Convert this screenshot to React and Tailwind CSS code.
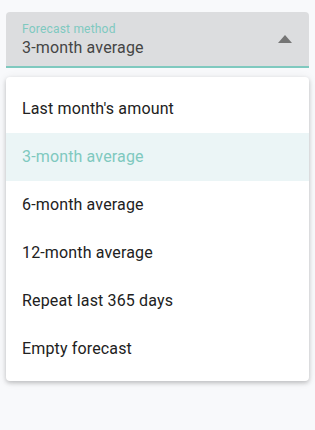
import React, { useState } from "react";

const options = [
  "Last month's amount",
  "3-month average",
  "6-month average",
  "12-month average",
  "Repeat last 365 days",
  "Empty forecast",
];

const App = () => {
  const [selected, setSelected] = useState(options[1]);

  return (
    <div className="min-h-[430px] w-full bg-[#f8f9fb] px-[6px] pt-3 font-['Roboto',sans-serif]">
      {/* Select field */}
      <div className="relative h-14 rounded-t bg-[#dcdddf] border-b-2 border-[#7fc9bf] pl-4 pr-4">
        <div className="pt-[10px] text-[12px] leading-[14px] tracking-[0.2px] text-[#7fc9bf]">Forecast method</div>
        <div className="mt-[2px] text-[16px] leading-[20px] tracking-[0.15px] text-[#454545]">{selected}</div>
        <svg
          className="absolute right-[17px] top-[23px]"
          width="14"
          height="8"
          viewBox="0 0 14 8"
        >
          <path d="M0 8 L7 0 L14 8 Z" fill="#757575" />
        </svg>
      </div>

      {/* Menu */}
      <ul className="mt-[9px] rounded bg-white py-2 shadow-[0_2px_4px_rgba(0,0,0,0.2),0_1px_10px_rgba(0,0,0,0.08)]">
        {options.map((opt) => (
          <li
            key={opt}
            onClick={() => setSelected(opt)}
            className={`h-12 flex items-center px-4 text-[16px] tracking-[0.15px] cursor-pointer ${
              opt === selected ? "bg-[#ebf5f6] text-[#7fc9bf]" : "text-[#212121]"
            }`}
          >
            {opt}
          </li>
        ))}
      </ul>
    </div>
  );
};

export default App;
